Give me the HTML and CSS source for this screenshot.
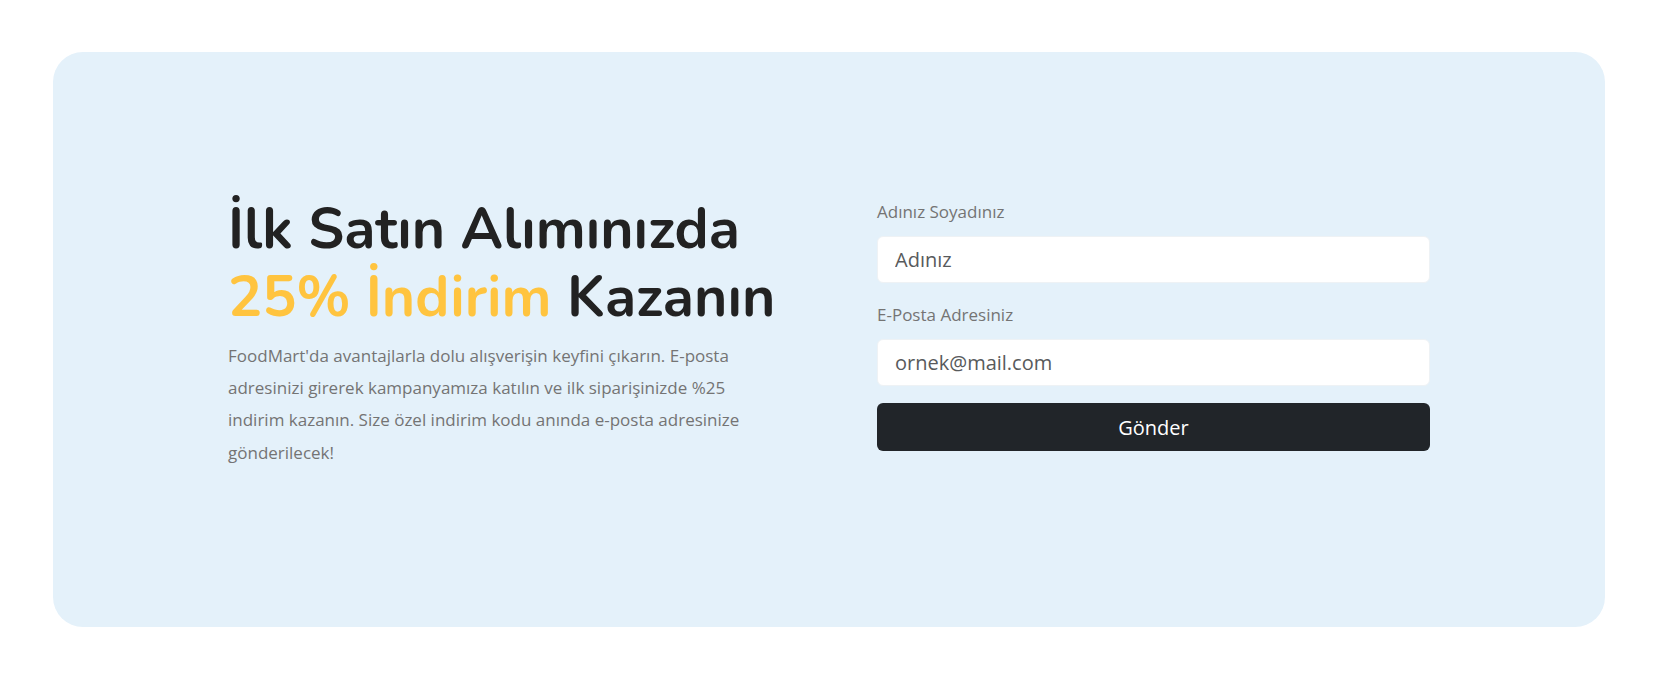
FILE: index.html
```html
<!DOCTYPE html>
<html lang="tr">
<head>
<meta charset="utf-8">
<title>FoodMart</title>
<link rel="stylesheet" href="styles.css">
</head>
<body>
<section class="page">
  <div class="banner">
    <div class="intro">
      <h2 class="title">İlk Satın Alımınızda <span class="accent">25% İndirim</span> Kazanın</h2>
      <p class="lead">FoodMart'da avantajlarla dolu alışverişin keyfini çıkarın. E-posta adresinizi girerek kampanyamıza katılın ve ilk siparişinizde %25 indirim kazanın. Size özel indirim kodu anında e-posta adresinize gönderilecek!</p>
    </div>
    <form class="form">
      <label class="label" for="name">Adınız Soyadınız</label>
      <input class="field" id="name" type="text" placeholder="Adınız">
      <label class="label label-second" for="mail">E-Posta Adresiniz</label>
      <input class="field" id="mail" type="email" placeholder="ornek@mail.com">
      <button class="submit" type="button">Gönder</button>
    </form>
  </div>
</section>
</body>
</html>
```

FILE: styles.css
```css
* { box-sizing: border-box; }
html, body { margin: 0; padding: 0; background: #fff; }
body { font-family: "Open Sans", "Liberation Sans", sans-serif; color: #747474; }

.page {
  padding: 52px 64px 0 53px;
}

.banner {
  height: 575px;
  background: #e4f1fa;
  border-radius: 30px;
  display: flex;
  align-items: flex-start;
  padding: 143px 0 0 175px;
  gap: 97px;
}

.intro { width: 552px; flex: none; }

.title {
  margin: 0 0 8px;
  font-family: "Nunito", "Lato", "Noto Sans", sans-serif;
  font-weight: 700;
  font-size: 57px;
  line-height: 68.4px;
  color: #222222;
}
.accent { color: #ffc43f; }

.lead {
  margin: 0;
  font-size: 17px;
  line-height: 32.3px;
  color: #747474;
}

.form {
  width: 553px;
  flex: none;
  display: flex;
  flex-direction: column;
  margin-top: 4px;
}

.label {
  font-size: 17px;
  line-height: 25px;
  color: #747474;
  margin-bottom: 12px;
}
.label-second { margin-top: 19px; }

.field {
  height: 47px;
  border: 1px solid #eef2f5;
  border-radius: 6px;
  background: #fff;
  padding: 0 17px;
  font-family: "Open Sans", "Liberation Sans", sans-serif;
  font-size: 20px;
  color: #444;
  outline: none;
}
.field::placeholder { color: #585a5c; opacity: 1; }

.submit {
  margin-top: 17px;
  height: 48px;
  border: none;
  border-radius: 6px;
  background: #212529;
  color: #fff;
  font-family: "Open Sans", "Liberation Sans", sans-serif;
  font-size: 20px;
  cursor: pointer;
}
```
